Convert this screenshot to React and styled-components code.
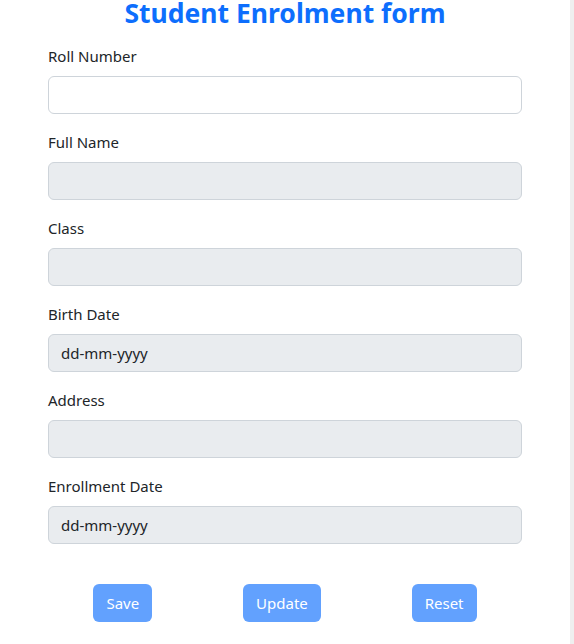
import React from 'react';
import styled, { createGlobalStyle } from 'styled-components';

const GlobalStyle = createGlobalStyle`
  * {
    box-sizing: border-box;
  }

  body {
    margin: 0;
    background: #ffffff;
    color: #212529;
    font-family: "Noto Sans", "Open Sans", sans-serif;
    font-size: 15px;
  }
`;

const Screen = styled.div`
  display: flex;
  min-height: 644px;
`;

const Page = styled.main`
  flex: 1;
  background: #ffffff;
  padding: 0 48px;
`;

const Gutter = styled.div`
  width: 4px;
  background: #efefef;
`;

const Title = styled.h1`
  margin: 0 0 18px;
  color: #0d6efd;
  font-size: 26.5px;
  font-weight: 700;
  line-height: 26px;
  text-align: center;
`;

const Field = styled.div`
  margin-bottom: 16px;
`;

const Label = styled.label`
  display: block;
  margin-bottom: 8px;
  font-size: 15px;
  line-height: 24px;
`;

const Input = styled.input`
  display: block;
  width: 100%;
  height: 38px;
  padding: 6px 12px;
  border: 1px solid #ced4da;
  border-radius: 6px;
  background: ${({ disabled }) => (disabled ? '#e9ecef' : '#ffffff')};
  color: #212529;
  font-family: inherit;
  font-size: 15px;
  line-height: 24px;
  opacity: 1;
  -webkit-text-fill-color: #212529;
`;

const Actions = styled.div`
  display: flex;
  justify-content: space-around;
  margin-top: 40px;
`;

const Button = styled.button`
  height: 38px;
  padding: 6px 13px;
  border: 0;
  border-radius: 6px;
  background: #62a1fe;
  color: #ffffff;
  font-family: inherit;
  font-size: 15px;
  line-height: 24px;
`;

const fields = [
  { id: 'roll', label: 'Roll Number', enabled: true },
  { id: 'name', label: 'Full Name' },
  { id: 'class', label: 'Class' },
  { id: 'birth', label: 'Birth Date', value: 'dd-mm-yyyy' },
  { id: 'address', label: 'Address' },
  { id: 'enrol', label: 'Enrollment Date', value: 'dd-mm-yyyy' },
];

const App = () => (
  <>
    <GlobalStyle />
    <Screen>
      <Page>
        <Title>Student Enrolment form</Title>
        <form onSubmit={e => e.preventDefault()}>
          {fields.map(f => (
            <Field key={f.id}>
              <Label htmlFor={f.id}>{f.label}</Label>
              <Input id={f.id} type="text" disabled={!f.enabled} defaultValue={f.value || ''} />
            </Field>
          ))}
          <Actions>
            <Button type="button" disabled>Save</Button>
            <Button type="button" disabled>Update</Button>
            <Button type="button" disabled>Reset</Button>
          </Actions>
        </form>
      </Page>
      <Gutter />
    </Screen>
  </>
);

export default App;
